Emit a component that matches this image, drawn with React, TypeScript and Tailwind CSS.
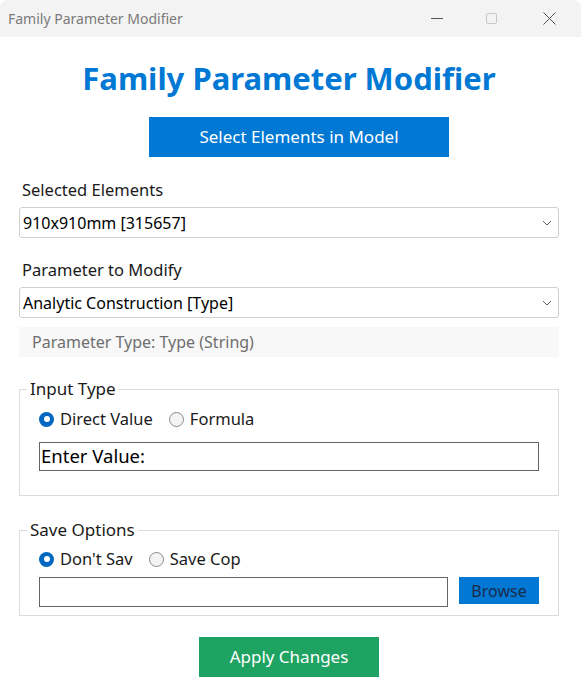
import type { ReactNode } from 'react'

// ── Small pieces ──────────────────────────────

function Chevron(): ReactNode {
  return (
    <svg width="10" height="6" viewBox="0 0 10 6" className="shrink-0">
      <path d="M1 1 L5 5 L9 1" fill="none" stroke="#606060" strokeWidth="1" />
    </svg>
  )
}

function Combo({ value }: { value: string }): ReactNode {
  return (
    <div className="flex h-[31px] items-center justify-between rounded-[3px] border border-[#d0d0d0] bg-white pl-[3px] pr-[6px] text-[16px] text-black">
      <span>{value}</span>
      <Chevron />
    </div>
  )
}

function Radio({ label, checked }: { label: string; checked?: boolean }): ReactNode {
  return (
    <label className="flex items-center gap-[6px] text-[16.5px] leading-[24px] text-[#1a1a1a]">
      {checked ? (
        <span className="flex size-[15px] items-center justify-center rounded-full bg-[#0067c0]">
          <span className="size-[6px] rounded-full bg-white" />
        </span>
      ) : (
        <span className="size-[15px] rounded-full border border-[#8a8a8a] bg-[#f3f3f3]" />
      )}
      {label}
    </label>
  )
}

function Group({ title, children }: { title: string; children: ReactNode }): ReactNode {
  return (
    <fieldset className="border border-[#dcdcdc]">
      <legend className="ml-[7px] px-[3px] text-[17px] leading-[22px] text-[#1a1a1a]">{title}</legend>
      <div className="px-[19px]">{children}</div>
    </fieldset>
  )
}

// ── Main export ───────────────────────────────

export default function App(): ReactNode {
  return (
    <div
      className="h-[688px] w-[581px] overflow-hidden rounded-lg bg-white"
      style={{ fontFamily: '"Noto Sans", "Open Sans", sans-serif' }}
    >
      {/* title bar */}
      <div className="flex h-[37px] items-center justify-between bg-[#f3f3f3] pl-[8px]">
        <span className="text-[14px] text-[#7a7a7a]">Family Parameter Modifier</span>
        <div className="flex h-full items-center">
          <div className="flex w-[56px] justify-center">
            <span className="h-px w-[12px] bg-[#555]" />
          </div>
          <div className="flex w-[52px] justify-center">
            <span className="size-[11px] rounded-[2px] border border-[#c8c8c8]" />
          </div>
          <div className="flex w-[64px] justify-center">
            <svg width="13" height="13" viewBox="0 0 13 13">
              <path d="M0.5 0.5 L12.5 12.5 M12.5 0.5 L0.5 12.5" stroke="#555" strokeWidth="1" />
            </svg>
          </div>
        </div>
      </div>

      {/* body */}
      <div className="flex flex-col pl-[19px] pr-[22px]">
        <h1 className="mt-[21px] text-center text-[31px] leading-[40px] font-bold text-[#0078d4]">
          Family Parameter Modifier
        </h1>

        <button
          type="button"
          className="mt-[19px] ml-[130px] h-[40px] w-[300px] bg-[#0078d4] text-[17px] text-white"
        >
          Select Elements in Model
        </button>

        <p className="mt-[22px] pl-[3px] text-[16.5px] leading-[22px] text-[#1a1a1a]">Selected Elements</p>
        <div className="mt-[6px]">
          <Combo value="910x910mm [315657]" />
        </div>

        <p className="mt-[21px] pl-[3px] text-[16.5px] leading-[22px] text-[#1a1a1a]">Parameter to Modify</p>
        <div className="mt-[6px]">
          <Combo value="Analytic Construction [Type]" />
        </div>

        <div className="mt-[9px] flex h-[30px] items-center bg-[#f8f8f8] pl-[13px] text-[16px] text-[#6e6e6e]">
          Parameter Type: Type (String)
        </div>

        <div className="mt-[21px]">
          <Group title="Input Type">
            <div className="mt-[7px] flex items-center gap-[16px]">
              <Radio label="Direct Value" checked />
              <Radio label="Formula" />
            </div>
            <div className="mt-[11px] flex h-[29px] items-center border border-[#646464] pl-[1px] text-[18.5px] leading-none text-black">
              Enter Value:
            </div>
            <div className="h-[24px]" />
          </Group>
        </div>

        <div className="mt-[23px]">
          <Group title="Save Options">
            <div className="mt-[6px] flex items-center gap-[16px]">
              <Radio label="Don't Sav" checked />
              <Radio label="Save Cop" />
            </div>
            <div className="mt-[6px] flex items-start gap-[11px]">
              <div className="h-[30px] w-[409px] border border-[#646464]" />
              <button
                type="button"
                className="h-[27px] w-[80px] bg-[#0078d4] text-[16px] text-[#1c2b4a]"
              >
                Browse
              </button>
            </div>
            <div className="h-[8px]" />
          </Group>
        </div>

        <button
          type="button"
          className="mx-auto mt-[21px] h-[40px] w-[180px] bg-[#1ea362] text-[17px] text-white"
        >
          Apply Changes
        </button>
      </div>
    </div>
  )
}
